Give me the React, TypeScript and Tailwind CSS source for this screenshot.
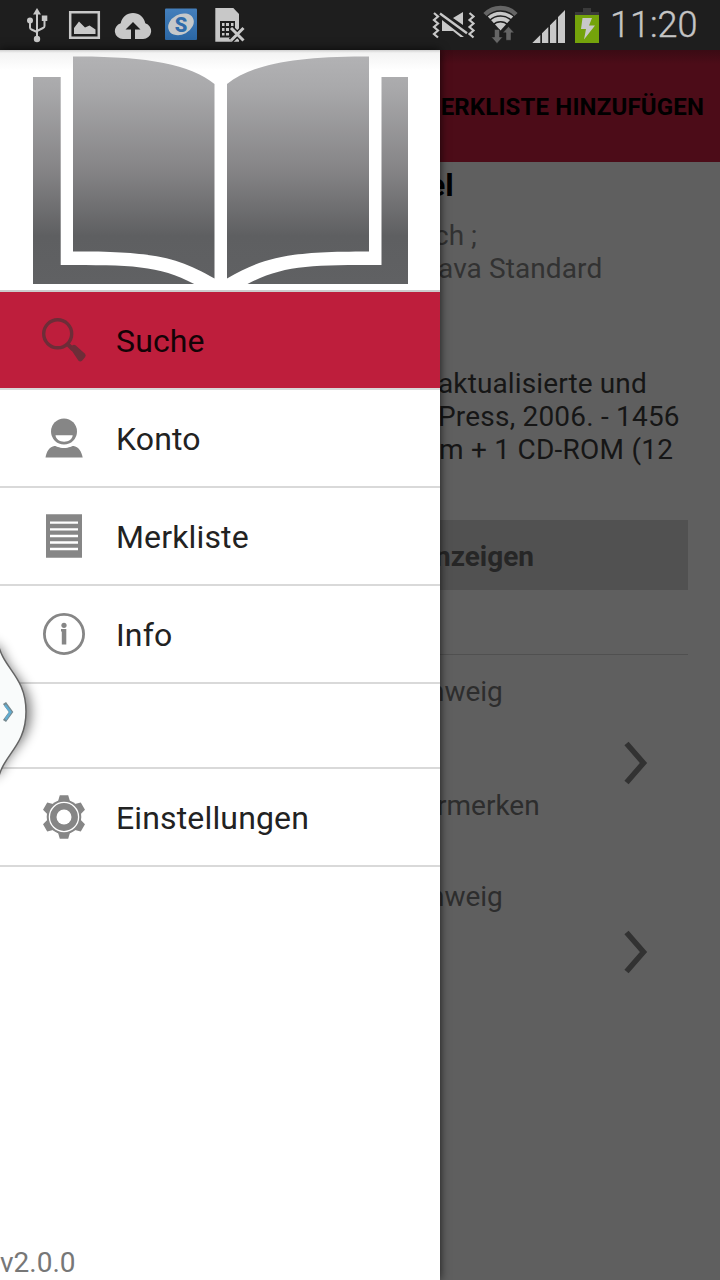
import React from "react";

const ICON = "#c8c8c8";
const DARK = "#1e1e1e";

function StatusBar() {
  return (
    <header className="flex h-[50px] shrink-0 items-center bg-[#1e1e1e] text-[#c5c5c5]">
      <div className="flex flex-1">
        <svg className="ml-6" width="26" height="50" viewBox="24 0 26 50" fill={ICON}>
          <path d="M37 8l4 6.500h-8z" />
          <path d="M37 12v26M30 21v6.500q0 1.500 1.500 2L37 32M44.500 19v7q0 1.500-1.500 2L37 31" fill="none" stroke={ICON} strokeWidth="2" />
          <circle cx="37" cy="39" r="3.200" />
          <circle cx="30" cy="20.500" r="3" />
          <path d="M41.800 15.500h5.500v5.500h-5.500z" />
        </svg>
        <svg className="ml-[18px]" width="34" height="50" viewBox="68 0 34 50">
          <path d="M70.200 12.200h28.600v25.600H70.200z" fill="none" stroke={ICON} strokeWidth="2.500" />
          <path d="M74 34v-6l5-6.500 6 6 4.500-2 6 4V34z" fill={ICON} />
        </svg>
        <svg className="ml-[12px]" width="38" height="50" viewBox="114 0 38 50">
          <path d="M123 39a8 8 0 0 1-2.300-15.700C122 17 127 13 133 13s11 4 12.300 10.300A8 8 0 0 1 143 39z" fill={ICON} />
          <path d="M133 22l7.500 7.500H135V39h-4v-9.500h-5.500z" fill={DARK} />
        </svg>
        <svg className="ml-[12px]" width="34" height="50" viewBox="164 0 34 50">
          <defs>
            <linearGradient id="app" x1="0" y1="0" x2="0" y2="1">
              <stop offset="0" stopColor="#447fbc" />
              <stop offset="1" stopColor="#2b67a5" />
            </linearGradient>
          </defs>
          <rect x="165" y="8.500" width="32" height="31.500" rx="1" fill="url(#app)" />
          <ellipse cx="181" cy="24.300" rx="13.500" ry="10" transform="rotate(-28 181 24.300)" fill="#c5c8ca" />
          <text x="181" y="31.500" textAnchor="middle" fontFamily="Roboto, sans-serif" fontWeight="900" fontSize="20" fill="#2f6cab">S</text>
        </svg>
        <svg className="ml-[16px]" width="32" height="50" viewBox="214 0 32 50">
          <path d="M215.300 8h18l5.700 6v27.700h-23.700z" fill={ICON} />
          <path d="M220 21h15v16.500H220z" fill={DARK} />
          <path d="M222 23h2.500v3H222zM226 23h3v3h-3zM231 23h2.500v3H231zM222 28h2.500v3H222zM226 28h3v3h-3zM222 33h2.500v2.500H222zM226 33h3v2.500h-3z" fill={ICON} />
          <path d="M231 28l12.500 12.500M243.500 28L231 40.500" stroke={DARK} strokeWidth="6" />
          <path d="M231 28l12.500 12.500M243.500 28L231 40.500" stroke={ICON} strokeWidth="3" />
        </svg>
      </div>
      <svg width="44" height="50" viewBox="432 0 44 50">
        <path d="M434 13l4 3.500-4 3.500 4 3.500-4 3.500 4 3.500-4 3.500 4 3.500M469.500 13l4 3.500-4 3.500 4 3.500-4 3.500 4 3.500-4 3.500 4 3.500" fill="none" stroke={ICON} strokeWidth="2.200" />
        <path d="M442 20l22 17h-3.500l-7.500-6h-11zM463 12v13l-10-7z" fill={ICON} />
        <path d="M440 13.500l27 19.800" stroke={ICON} strokeWidth="2.400" />
      </svg>
      <svg className="ml-[6px]" width="38" height="50" viewBox="482 0 38 50" fill="none">
        <path d="M500.500 30.500L487.800 16.500a19 19 0 0 1 25.400 0z" fill={ICON} />
        <path d="M485 14.500a21.500 21.500 0 0 1 31 0" stroke="#656565" strokeWidth="4.500" />
        <path d="M489.500 20.500a15.500 15.500 0 0 1 22 0M493 25a10.500 10.500 0 0 1 15 0" stroke={DARK} strokeWidth="1.500" />
        <path d="M494.500 29.500h5v7.500h3.200l-5.700 6.500-5.700-6.500h3.200zM506 40.300h5v-7.500h3.200L508.500 26.500l-5.700 6.300h3.200z" fill="#656565" stroke={DARK} strokeWidth="0.500" />
      </svg>
      <svg className="ml-[12px]" width="34" height="50" viewBox="532 0 34 50" fill={ICON}>
        <path d="M532.300 43l8-8v8zM542 43V33.300l6.300-6.300v16zM550 43V25.300l6.300-6.300v24zM558 43V17l7-7v33z" />
      </svg>
      <svg className="ml-[8px]" width="26" height="50" viewBox="574 0 26 50">
        <path d="M583 8h8v4h8v3.200h-24V12h8z" fill="#3a3a3a" />
        <path d="M575 15h24v28h-24z" fill="#74a30b" />
        <path d="M582.500 18h9.500l-3 7.500h6L584 39.500l2-10.500h-5z" fill={ICON} />
      </svg>
      <time className="ml-[10px] w-[110px] font-[Roboto,sans-serif] text-[36px] leading-[50px] [-webkit-text-stroke:0.4px_#c5c5c5] font-light">11:20</time>
    </header>
  );
}

function BookLogo() {
  return (
    <svg className="block" width="440" height="240" viewBox="0 50 440 240">
      <defs>
        <linearGradient id="book" gradientUnits="userSpaceOnUse" x1="0" y1="56" x2="0" y2="284">
          <stop offset="0" stopColor="#b2b2b4" />
          <stop offset="0.140" stopColor="#a9a9ab" />
          <stop offset="0.500" stopColor="#858486" />
          <stop offset="0.790" stopColor="#5e5f61" />
          <stop offset="1" stopColor="#606163" />
        </linearGradient>
      </defs>
      <g fill="url(#book)">
        <path d="M73 56.500C145 56 190 64 214.500 84V278.500C176 257 155 251.500 73 251.500z" />
        <path d="M369 56.500C297 56 252 64 227 84V278.500C265 257 287 251.500 369 251.500z" />
        <path d="M33 77h27.700v188c70 0 98 0 133.500 19H33z" />
        <path d="M408 77h-26.500v188c-70 0-98 0-134 19H408z" />
      </g>
    </svg>
  );
}

function SearchIcon() {
  return (
    <svg width="48" height="48" viewBox="40 316 48 48">
      <circle cx="57.700" cy="333.800" r="14" fill="none" stroke="#6d2d38" strokeWidth="3.400" />
      <path d="M67 343.500l6 6" stroke="#6d2d38" strokeWidth="4" />
      <path d="M71 349.500q-1.500-1.500 0-3l1.500-1.300q1.500-1 3 0l9.500 8.500q1.500 1.500 0 3.500l-3 3.500q-1.700 1.500-3.500 0z" fill="#6d2d38" />
    </svg>
  );
}

function UserIcon() {
  return (
    <svg width="48" height="48" viewBox="40 414 48 48" fill="#868686">
      <circle cx="64" cy="431.500" r="13" />
      <path d="M55.500 435.300h17.200c-.5 4-4 6.400-8.600 6.400s-8.100-2.400-8.600-6.400z" fill="#fff" />
      <path d="M45.500 457.500c1-6 4-11 9-11.500 2 0 4 2 9.500 2s7.500-2 9.500-2c5 .5 8 5.500 9.200 11.500z" />
    </svg>
  );
}

function ListIcon() {
  return (
    <svg width="48" height="48" viewBox="40 512 48 48">
      <path d="M46 514.200h36v43.500H46z" fill="#868686" />
      <path d="M50 522.700h28M50 529.300h28M50 536h28M50 542.500h28M50 549h28" stroke="#fff" strokeWidth="2.300" />
    </svg>
  );
}

function InfoIcon() {
  return (
    <svg width="48" height="48" viewBox="40 610 48 48" fill="#868686">
      <circle cx="64" cy="634" r="19.600" fill="none" stroke="#868686" strokeWidth="2.800" />
      <circle cx="64" cy="625.300" r="2.600" />
      <path d="M61 629h5.300v15.500h-4.500V631.500H61z" />
    </svg>
  );
}

function GearIcon() {
  return (
    <svg width="48" height="48" viewBox="40 793 48 48" fill="#868686">
      <circle cx="64" cy="817" r="17.300" />
      {[0, 60, 120, 180, 240, 300].map((angle) => (
        <path key={angle} d="M59.800 795.200h8.400l1.700 5.800 4.100 3H54l4.100-3z" transform={`rotate(${angle} 64 817)`} />
      ))}
      <circle cx="64" cy="817" r="14.600" fill="none" stroke="#fff" strokeWidth="1.300" />
      <circle cx="64" cy="817" r="7.500" fill="#fff" />
    </svg>
  );
}

function MenuItem({ icon, label, active = false }: { icon: React.ReactNode; label: string; active?: boolean }) {
  return (
    <li
      className={
        active
          ? "flex h-[98px] items-center gap-7 border-b-2 border-[#d9d9d9] bg-[#be1e3c] pl-10 text-[#130306]"
          : "flex h-[98px] items-center gap-7 border-b-2 border-[#d9d9d9] pl-10 text-[#222222]"
      }
    >
      {icon}
      <span className="pt-[2px] text-[32px] leading-[38px] tracking-[0.15px]">{label}</span>
    </li>
  );
}

function Drawer() {
  return (
    <nav className="z-10 flex w-[440px] shrink-0 flex-col bg-white shadow-[0_0_9px_rgba(0,0,0,0.75)]">
      <div className="h-[242px] border-b-2 border-[#cccccc] bg-[linear-gradient(to_bottom,#d0d0d0_0px,#f3f3f3_3px,#ffffff_20px)]">
        <BookLogo />
      </div>
      <ul>
        <MenuItem icon={<SearchIcon />} label="Suche" active />
        <MenuItem icon={<UserIcon />} label="Konto" />
        <MenuItem icon={<ListIcon />} label="Merkliste" />
        <MenuItem icon={<InfoIcon />} label="Info" />
        <li className="h-[85px] border-b-2 border-[#d9d9d9]" />
        <MenuItem icon={<GearIcon />} label="Einstellungen" />
      </ul>
      <p className="mt-auto mb-[1px] text-[28px] leading-[33px] text-[#777777]">v2.0.0</p>
    </nav>
  );
}

function Chevron() {
  return (
    <svg width="24" height="44" viewBox="0 0 24 44">
      <path d="M2.500 2.500L19.500 22 2.500 41.500" fill="none" stroke="#323232" strokeWidth="5.500" />
    </svg>
  );
}

function Detail() {
  return (
    <main className="flex flex-1 flex-col overflow-hidden bg-[#5f5f5f] text-[28px] leading-[33px] whitespace-nowrap">
      <div className="flex h-[112px] shrink-0 items-center justify-end bg-[linear-gradient(to_bottom,#3a0b14_0px,#4c0c18_14px)] pt-[2px] pr-4 text-[24px] font-bold tracking-[0.16px] text-black">
        ERKLISTE HINZUFÜGEN
      </div>
      <h1 className="mt-1 -ml-[12px] text-[32px] leading-[38px] font-bold text-black">el</h1>
      <div className="mt-[15px] -ml-[6px] text-[#323232]">
        <p>ch ;</p>
        <p className="ml-[4px] tracking-[0.1px]">ava Standard</p>
      </div>
      <div className="mt-[82px] -ml-[2px] text-[#161616]">
        <p className="tracking-[0.12px]">aktualisierte und</p>
        <p className="tracking-[0.2px]">Press, 2006. - 1456</p>
        <p className="ml-[1px] tracking-[0.25px]">m + 1 CD-ROM (12</p>
      </div>
      <div className="mt-[54px] mr-8 flex h-[70px] items-center bg-[#515151] pt-[3px] font-bold text-[#262626]">
        <span className="-ml-[5px]">nzeigen</span>
      </div>
      <div className="mt-16 mr-8 h-px bg-[#505050]" />
      <p className="mt-5 -ml-[11px] text-[#2d2d2d]">hweig</p>
      <div className="mt-[33px] flex justify-end pr-[72px]">
        <Chevron />
      </div>
      <p className="mt-[4px] -ml-[3px] text-[#2d2d2d]">rmerken</p>
      <p className="mt-[58px] -ml-[11px] text-[#2d2d2d]">hweig</p>
      <div className="mt-[17px] flex justify-end pr-[72px]">
        <Chevron />
      </div>
    </main>
  );
}

function EdgeHandle() {
  return (
    <svg className="absolute top-[625px] left-0 z-20" width="70" height="175" viewBox="0 625 70 175">
      <defs>
        <filter id="soft" x="-50%" y="-20%" width="250%" height="140%">
          <feGaussianBlur stdDeviation="6" />
        </filter>
      </defs>
      <path d="M-10 640L2 650C9 675 31 682 31 712S9 750 2 770L-10 780z" fill="#000" opacity="0.500" filter="url(#soft)" />
      <path d="M-2 643C3 669 26 676 26 711.500C26 747 3 754 -2 780z" fill="#f9fbfb" stroke="#646464" strokeWidth="1.500" />
      <path d="M4.500 703l6.500 9-6.500 9" fill="none" stroke="#77898f" strokeWidth="3.800" />
      <path d="M5 705l5.500 7-5 7.500" fill="none" stroke="#62acd0" strokeWidth="2.300" />
    </svg>
  );
}

export default function App() {
  return (
    <div className="relative flex h-[1280px] w-[720px] flex-col overflow-hidden bg-[#5f5f5f] font-[Roboto,sans-serif]">
      <StatusBar />
      <div className="flex min-h-0 flex-1">
        <Drawer />
        <Detail />
      </div>
      <EdgeHandle />
    </div>
  );
}
